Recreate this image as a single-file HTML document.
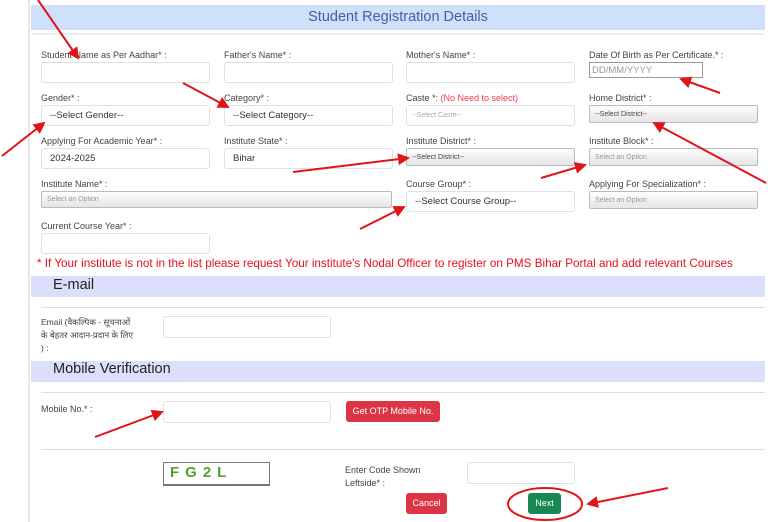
<!DOCTYPE html>
<html><head><meta charset="utf-8"><style>
*{box-sizing:border-box;margin:0;padding:0}
body{width:768px;height:522px;overflow:hidden;background:#fff;font-family:"Liberation Sans","Noto Sans CJK SC",sans-serif;position:relative;color:#333}
.a{position:absolute}
.lb{position:absolute;font-size:9px;color:#444;white-space:nowrap}
.in{position:absolute;border:1px solid #dde1e6;border-radius:3px;background:#fff;font-size:9.5px;color:#333;padding-left:10px;display:flex;align-items:center}
.sel{position:absolute;border:1px solid #bbb;border-radius:2px;background:linear-gradient(#fff,#eee 60%,#e6e6e6);font-size:7px;color:#999;padding-left:5px;display:flex;align-items:center}
.hr{position:absolute;left:41px;width:724px;height:1px;background:#ddd}
.bar{position:absolute;left:31px;width:734px;background:#dcdffb;font-size:14.5px;color:#222;padding-left:22px}
</style></head><body>
<div class="a" style="left:28px;top:0;width:2px;height:522px;background:#e6e6e6"></div>
<div class="a" style="left:31px;top:5px;width:734px;height:25px;background:#cfe0fb;color:#4a5aa8;font-size:14.5px;text-align:center;line-height:25px">Student Registration Details</div>
<div class="a" style="left:31px;top:33px;width:734px;height:2px;background:#eee"></div>

<div class="lb" style="left:41px;top:50px">Student Name as Per Aadhar* :</div>
<div class="in" style="left:41px;top:62px;width:169px;height:21px"></div>
<div class="lb" style="left:224px;top:50px">Father's Name* :</div>
<div class="in" style="left:224px;top:62px;width:169px;height:21px"></div>
<div class="lb" style="left:406px;top:50px">Mother's Name* :</div>
<div class="in" style="left:406px;top:62px;width:169px;height:21px"></div>
<div class="lb" style="left:589px;top:50px">Date Of Birth as Per Certificate.* :</div>
<div class="in" style="left:589px;top:62px;width:114px;height:16px;border:1px solid #999;border-radius:0;padding-left:2px;color:#999">DD/MM/YYYY</div>

<div class="lb" style="left:41px;top:93px">Gender* :</div>
<div class="in" style="left:41px;top:105px;width:169px;height:21px;padding-left:8px">--Select Gender--</div>
<div class="lb" style="left:224px;top:93px">Category* :</div>
<div class="in" style="left:224px;top:105px;width:169px;height:21px;padding-left:8px">--Select Category--</div>
<div class="lb" style="left:406px;top:93px">Caste *: <span style="color:#f03a4a">(No Need to select)</span></div>
<div class="in" style="left:406px;top:105px;width:169px;height:21px;font-size:7px;color:#aaa;padding-left:5px">--Select Caste--</div>
<div class="lb" style="left:589px;top:93px">Home District* :</div>
<div class="sel" style="left:589px;top:105px;width:169px;height:18px;color:#444">--Select District--</div>

<div class="lb" style="left:41px;top:136px">Applying For Academic Year* :</div>
<div class="in" style="left:41px;top:148px;width:169px;height:21px;padding-left:8px">2024-2025</div>
<div class="lb" style="left:224px;top:136px">Institute State* :</div>
<div class="in" style="left:224px;top:148px;width:169px;height:21px;padding-left:8px">Bihar</div>
<div class="lb" style="left:406px;top:136px">Institute District* :</div>
<div class="sel" style="left:406px;top:148px;width:169px;height:18px;color:#444">--Select District--</div>
<div class="lb" style="left:589px;top:136px">Institute Block* :</div>
<div class="sel" style="left:589px;top:148px;width:169px;height:18px">Select an Option</div>

<div class="lb" style="left:41px;top:179px">Institute Name* :</div>
<div class="sel" style="left:41px;top:191px;width:351px;height:17px">Select an Option</div>
<div class="lb" style="left:406px;top:179px">Course Group* :</div>
<div class="in" style="left:406px;top:191px;width:169px;height:21px;padding-left:8px">--Select Course Group--</div>
<div class="lb" style="left:589px;top:179px">Applying For Specialization* :</div>
<div class="sel" style="left:589px;top:191px;width:169px;height:18px">Select an Option</div>

<div class="lb" style="left:41px;top:221px">Current Course Year* :</div>
<div class="in" style="left:41px;top:233px;width:169px;height:21px"></div>

<div class="a" style="left:37px;top:257px;font-size:11.7px;color:#e8101e;white-space:nowrap">* If Your institute is not in the list please request Your institute's Nodal Officer to register on PMS Bihar Portal and add relevant Courses</div>

<div class="bar" style="top:276px;height:21px;line-height:18px">E-mail</div>
<div class="hr" style="top:307px"></div>
<div class="lb" style="left:41px;top:316px;font-size:8.5px;line-height:13px;white-space:normal;width:100px">Email (वैकल्पिक - सूचनाओं<br>के बेहतर आदान-प्रदान के लिए<br>) :</div>
<div class="in" style="left:163px;top:316px;width:168px;height:22px"></div>

<div class="bar" style="top:361px;height:21px;line-height:17px">Mobile Verification</div>
<div class="hr" style="top:392px"></div>
<div class="lb" style="left:41px;top:404px">Mobile No.* :</div>
<div class="in" style="left:163px;top:401px;width:168px;height:22px"></div>
<div class="a" style="left:346px;top:401px;width:94px;height:21px;background:#dc3545;border-radius:3px;color:#fff;font-size:9px;line-height:21px;text-align:center">Get OTP Mobile No.</div>
<div class="hr" style="top:449px"></div>

<div class="a" style="left:163px;top:462px;width:107px;height:24px;border:1px solid #777;border-bottom-width:2px;font:bold 15px 'Liberation Sans',sans-serif;color:#5a9e2a;padding-left:6px;letter-spacing:6px;line-height:20px">FG2L</div>
<div class="lb" style="left:345px;top:464px;line-height:13px">Enter Code Shown<br>Leftside* :</div>
<div class="in" style="left:467px;top:462px;width:108px;height:22px"></div>
<div class="a" style="left:406px;top:493px;width:41px;height:21px;background:#dc3545;border-radius:3px;color:#fff;font-size:9px;line-height:21px;text-align:center">Cancel</div>
<div class="a" style="left:528px;top:493px;width:33px;height:21px;background:#198754;border-radius:3px;color:#fff;font-size:9px;line-height:21px;text-align:center">Next</div>

<svg class="a" style="left:0;top:0" width="768" height="522">
<defs><marker id="m" markerWidth="6" markerHeight="6" refX="5" refY="3" orient="auto"><path d="M0,0 L6,3 L0,6 Z" fill="#e0151b"/></marker></defs>
<g stroke="#e0151b" stroke-width="2" fill="none" marker-end="url(#m)">
<line x1="38" y1="0" x2="78" y2="58"/>
<line x1="183" y1="83" x2="228" y2="107"/>
<line x1="2" y1="156" x2="44" y2="123"/>
<line x1="293" y1="172" x2="408" y2="158"/>
<line x1="360" y1="229" x2="404" y2="207"/>
<line x1="541" y1="178" x2="585" y2="165"/>
<line x1="720" y1="93" x2="681" y2="79"/>
<line x1="766" y1="183" x2="654" y2="123"/>
<line x1="95" y1="437" x2="162" y2="412"/>
<line x1="668" y1="488" x2="588" y2="504"/>
</g>
<ellipse cx="545" cy="504" rx="37" ry="16" stroke="#e0151b" stroke-width="2" fill="none"/>
</svg>
</body></html>
